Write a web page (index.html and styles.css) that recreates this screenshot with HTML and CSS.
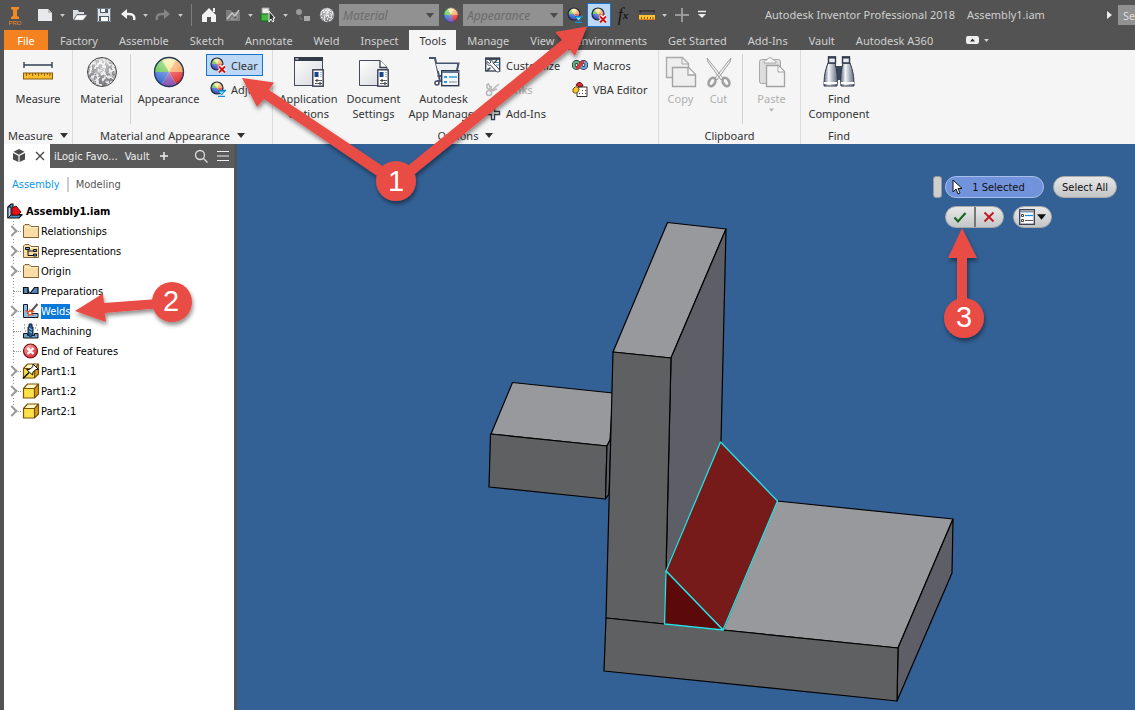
FILE: index.html
```html
<!DOCTYPE html>
<html lang="en">
<head>
<meta charset="utf-8">
<title>Autodesk Inventor Professional 2018</title>
<link rel="stylesheet" href="styles.css">
</head>
<body>
<svg class="sprite" aria-hidden="true">
  <defs>
    <linearGradient id="metal" x1="0" x2="1" y1="0" y2="1"><stop offset="0" stop-color="#fff"/><stop offset="1" stop-color="#d5d7dc"/></linearGradient>
    <linearGradient id="steel" x1="0" x2="1"><stop offset="0" stop-color="#596579"/><stop offset=".35" stop-color="#f4f6f9"/><stop offset="1" stop-color="#626d80"/></linearGradient>
    <radialGradient id="shine" cx=".5" cy=".1" r=".8"><stop offset="0" stop-color="#fff" stop-opacity=".65"/><stop offset="1" stop-color="#fff" stop-opacity="0"/></radialGradient>
    <radialGradient id="redball" cx=".35" cy=".25" r=".9"><stop offset="0" stop-color="#f9a6a6"/><stop offset="1" stop-color="#cf1720"/></radialGradient>
    <filter id="grain" x="0" y="0" width="1" height="1"><feTurbulence type="fractalNoise" baseFrequency=".3" numOctaves="3" seed="4"/><feColorMatrix values="0 0 0 0 .2  0 0 0 0 .2  0 0 0 0 .22  4 4 0 0 -3.4"/><feComposite in2="SourceAlpha" operator="in"/></filter>
    <filter id="shadow" x="-20%" y="-20%" width="150%" height="150%"><feDropShadow dx="1" dy="3" stdDeviation="2" flood-opacity=".45"/></filter>
  </defs>
  <symbol id="wheel" viewBox="0 0 32 32">
    <path fill="#f2e05c" d="M16 16 8.500 3a15 15 0 0 1 15 0z"/><path fill="#f79646" d="M16 16 23.500 3A15 15 0 0 1 31 16z"/><path fill="#e63232" d="M16 16H31a15 15 0 0 1-7.500 13z"/><path fill="#8c5ab4" d="M16 16l7.500 13a15 15 0 0 1-15 0z"/><path fill="#3f6fd0" d="M16 16 8.500 29A15 15 0 0 1 1 16z"/><path fill="#54c03c" d="M16 16H1A15 15 0 0 1 8.500 3z"/>
    <circle cx="16" cy="16" r="14.500" fill="url(#shine)" stroke="#26395c" stroke-width="1.300"/>
  </symbol>
  <symbol id="ball" viewBox="0 0 32 32"><circle cx="16" cy="16" r="14.500" fill="#e9e9e9"/><circle cx="16" cy="16" r="14" filter="url(#grain)"/><circle cx="16" cy="16" r="14.500" fill="url(#shine)" stroke="#444" stroke-width="1"/></symbol>
  <symbol id="miniwheel" viewBox="0 0 16 16"><circle cx="7" cy="7" r="6" fill="#f3da45"/><path fill="#45b53c" d="M7 7 3 2.300A6 6 0 0 0 1 7z"/><path fill="#3156c8" d="M7 7H1a6 6 0 0 0 6 6z"/><path fill="#8b4da7" d="M7 7v6a6 6 0 0 0 4-1.500z"/><path fill="#e43b32" d="M7 7l4 4.500A6 6 0 0 0 13 7z"/><path fill="#f59142" d="M7 7h6a6 6 0 0 0-2.500-4.800z"/><circle cx="7" cy="7" r="6" fill="url(#shine)" stroke="#1d2740" stroke-width="1.200"/></symbol>
  <symbol id="clear" viewBox="0 0 16 16"><use href="#miniwheel"/><path d="M9 9l6 6M15 9l-6 6" stroke="#fff" stroke-width="4"/><path d="M9 9.500l6 6M15 9.500l-6 6" stroke="#d01414" stroke-width="2"/></symbol>
  <symbol id="adjust" viewBox="0 0 16 16"><use href="#miniwheel"/><path d="M7 9.500h9M8 15.500h7" stroke="#1494d2" stroke-width="1.500"/><path d="M8 10h7l-3.500 4z" fill="#7fe3ff" stroke="#0678b8"/></symbol>
  <symbol id="measure" viewBox="0 0 32 32"><path d="M2 9h28M2 6v6M30 6v6" stroke="#333f55" stroke-width="1.400" fill="none"/><rect x="1.500" y="17" width="29" height="6" fill="#f8bd2a" stroke="#8a5b12"/><path d="M4.500 17v3M7.500 17v2M10.500 17v3M13.500 17v2M16.500 17v3M19.500 17v2M22.500 17v3M25.500 17v2M28 17v3" stroke="#6b4a10" stroke-width=".8"/></symbol>
  <symbol id="minimeasure" viewBox="0 0 16 16"><path d="M1 4h14M1 3v3M15 3v3" stroke="#222" fill="none"/><rect x="0" y="8" width="16" height="4" fill="#ffc42e"/><path d="M0 12.500h16" stroke="#e07a1a"/><path d="M2.500 10v2M5.500 10v2M8.500 10v2M11.500 10v2M14 10v2" stroke="#7b5310"/></symbol>
  <symbol id="sheet" viewBox="0 0 12 18"><rect x=".8" y=".8" width="10.400" height="16.400" fill="#fff" stroke="#343b4c" stroke-width="1.400"/><rect x="2.500" y="3" width="4" height="5" fill="#16478c"/><path d="M8 3.500h2M8 5.500h2M8 7.500h2" stroke="#98bde8"/><path d="M3 11.500h7M3 14.500h7" stroke="#444" stroke-width=".9"/><path d="M5 10v3M8 13v3" stroke="#444" stroke-width="1.200"/></symbol>
  <symbol id="appopt" viewBox="0 0 32 32"><rect x="1.500" y="1.500" width="28" height="28" fill="url(#metal)" stroke="#444b5a"/><path d="M1 1h29v4H1z" fill="#323947"/><path d="M2.500 3h3" stroke="#fff"/><use href="#sheet" x="19" y="13" width="12" height="18"/></symbol>
  <symbol id="docset" viewBox="0 0 32 32"><path d="M1.500 4.500h20.500l7 7v18H1.500z" fill="url(#metal)" stroke="#444b5a"/><path d="M22 4.500v7h7" fill="#fff" stroke="#343b4c" stroke-width="1.300"/><use href="#sheet" x="19" y="13" width="12" height="18"/></symbol>
  <symbol id="cart" viewBox="0 0 32 32"><path d="M1 2h6l5 23H9M7.500 7.500h23L29 14M9.500 20h4" fill="#f8f9fb" stroke="#47536b" stroke-width="2"/><path d="M8 8h21l-2 7H10z" fill="#eef0f4"/><circle cx="9" cy="27" r="2" fill="#fff" stroke="#47536b" stroke-width="1.600"/><rect x="13.700" y="14.700" width="17" height="15" fill="#f4f8fc" stroke="#303b4e" stroke-width="1.400"/><path d="M14 16h17" stroke="#60738f" stroke-width="2"/><path d="M16 20h3v2h-3zM16 25h3v2h-3z" fill="#2e9ae6"/><path d="M21 21h8" stroke="#138ae0" stroke-width="1.300"/><path d="M21 26h8" stroke="#888"/></symbol>
  <symbol id="customize" viewBox="0 0 16 16"><rect x=".700" y="1" width="14" height="13" fill="#fff" stroke="#333b4b" stroke-width="1.300"/><path d="M1 2h14" stroke="#333b4b" stroke-width="1.800"/><path d="M10 5.500h4M11 8h3M2 12h3" stroke="#3996d4"/><path d="M2 4.500c-1 3 2 4.500 3.500 3.500l6 6.500c1.500 1.500 4-.5 2.500-2.500L8 6C8.500 3.500 6 2.500 4.500 3l1.500 2-1.500 1.500z" fill="#fff" stroke="#39404e"/><path d="M2 14l3.500-3.500M9 6l3-3" stroke="#39404e" stroke-width="1.400"/></symbol>
  <symbol id="links" viewBox="0 0 16 16"><path d="M3 2l4 8M14 3 6 10M2 3v3c0 3 5 3 4-1M7 10l5-2" fill="none" stroke="#b9b9b9" stroke-width="1.600"/><circle cx="4" cy="12" r="2.500" fill="none" stroke="#b9b9b9" stroke-width="1.500"/></symbol>
  <symbol id="plus" viewBox="0 0 16 16"><path d="M6.500 1.500h3v5h5v3h-5v5h-3v-5h-5v-3h5z" fill="#fff" stroke="#353c4a" stroke-width="1.400"/></symbol>
  <symbol id="macros" viewBox="0 0 16 16"><ellipse cx="4.500" cy="8" rx="2.800" ry="3" fill="#eef4ee" stroke="#283860" stroke-width="3.800"/><ellipse cx="4.500" cy="8" rx="2.800" ry="3" fill="none" stroke="#67b76c" stroke-width="2"/><ellipse cx="11.500" cy="8" rx="2.800" ry="3" fill="#eef4ee" stroke="#283860" stroke-width="3.800"/><ellipse cx="11.500" cy="8" rx="2.800" ry="3" fill="none" stroke="#74a7dd" stroke-width="2"/><path d="M5.500 11l5-6" stroke="#db342d" stroke-width="3" stroke-linecap="round"/></symbol>
  <symbol id="vba" viewBox="0 0 16 16"><path d="M6 6h9v9.500H5V10z" fill="#fff" stroke="#333"/><path d="M7 12.500h1m2 0h1m2 0h1M10 9.500h1m2 0h1" stroke="#444"/><path d="M4 4c2-4 6-3 7 1L7 6z" fill="#dd2830" stroke="#53121a"/><path d="M1 8c3-4 6-2 6 1-1 3-4 4-6 2z" fill="#f9c92c" stroke="#6c4709"/></symbol>
  <symbol id="copy" viewBox="0 0 32 32"><path d="M1.500 1.500h16l6 6v14h-22z" fill="#eee" stroke="#a9a9a9" stroke-width="1.300"/><path d="M17 2v6h6" fill="none" stroke="#a9a9a9"/><path d="M7.500 11.500h16l7 7v12h-23z" fill="#efefef" stroke="#a3a3a3" stroke-width="1.400"/><path d="M23 12v7h7" fill="#fff" stroke="#a3a3a3" stroke-width="1.300"/></symbol>
  <symbol id="cut" viewBox="0 0 32 32"><path d="M4 2l16 20-2 2L5 6zM28 2 12 22l2 2L27 6z" fill="#eee" stroke="#a3a3a3"/><ellipse cx="9" cy="26" rx="3" ry="4.500" transform="rotate(30 9 26)" fill="none" stroke="#a0a0a0" stroke-width="2.600"/><ellipse cx="23" cy="26" rx="3" ry="4.500" transform="rotate(-30 23 26)" fill="none" stroke="#a0a0a0" stroke-width="2.600"/></symbol>
  <symbol id="paste" viewBox="0 0 32 32"><rect x="3.500" y="3.500" width="21" height="24" rx="2" fill="#ddd" stroke="#a8a8a8"/><path d="M8 7c0-2 1-3 3-3 0-3 6-3 6 0 2 0 3 1 3 3z" fill="#f7f7f7" stroke="#a8a8a8"/><path d="M10.500 9.500h12l6 6v15h-18z" fill="#f3f3f3" stroke="#a3a3a3" stroke-width="1.300"/><path d="M22 10v6h6" fill="#fff" stroke="#a3a3a3"/></symbol>
  <symbol id="binoc" viewBox="0 0 32 32"><path d="M12 10h8v14h-8z" fill="#3b4659"/><path d="M5 7h7c2 8 3 14 2 23H1c0-10 1-15 4-23z" fill="url(#steel)" stroke="#30394b"/><path d="M20 7h7c3 8 4 13 4 23H18c-1-9 0-15 2-23z" fill="url(#steel)" stroke="#30394b"/><path d="M5.500 1h7v6h-7zM19.500 1h7v6h-7z" fill="#e6e9ef" stroke="#30394b" stroke-width="1.400"/><path d="M5 1.500h8M19 1.500h8" stroke="#30394b" stroke-width="2"/><path d="M1 27h13M18 27h13" stroke="#fff" stroke-width="2"/></symbol>
  <symbol id="caret" viewBox="0 0 8 5"><path d="M0 0h8L4 5z" fill="currentColor"/></symbol>
  <symbol id="folder" viewBox="0 0 18 16"><path d="M1.500 14.500V3L3 1.500h4L9 3.500h7.500v11z" fill="#f9dda4" stroke="#85633a"/><path d="M2.500 4.500h13" stroke="#fff1cf"/></symbol>
  <symbol id="reps" viewBox="0 0 18 16"><use href="#folder"/><path d="M6 6v6.500h6M6 8h5" fill="none" stroke="#111"/><path d="M3.500 4.500h4v2h-4zM11.500 6.500h3v2h-3zM11.500 11h3v2h-3z" fill="#65a9e2" stroke="#111"/></symbol>
  <symbol id="prep" viewBox="0 0 18 16"><path d="M1.500 4.500H6l0 6H1.500zM8 10.500l4.500-6H16v6z" fill="#5187b8" stroke="#111" stroke-width="1.200"/><path d="M6 4.500l2 6H6z" fill="#111"/></symbol>
  <symbol id="weld" viewBox="0 0 18 16"><path d="M1.500 1.500h4v9H16v4H1.500z" fill="#8dbbe4" stroke="#16202c"/><path d="M15.500 1 9 8.500" stroke="#555" stroke-width="2"/><path d="M3 7l4 1 1-3 1 3 4 0-3 2 2 3-4-1-2 2v-3z" fill="#f05122"/><circle cx="8" cy="10" r="1.300" fill="#fff"/></symbol>
  <symbol id="mach" viewBox="0 0 18 16"><path d="M1.500 10.500h4v2h7v-2h3.500v4.500H1.500z" fill="#6da0cf" stroke="#111"/><path d="M7 1h3v3h1v8l-2.500 2L6 12V4h1z" fill="#24588a" stroke="#132236"/><path d="M7 5l3 2M7 8l3 2" stroke="#a9cbe8"/><path d="M2 5h1M3 8h1M13 5h1M15 7h1M2 2h1M14 2h1" stroke="#555"/></symbol>
  <symbol id="end" viewBox="0 0 18 16"><circle cx="8.500" cy="8" r="7" fill="url(#redball)" stroke="#70141a" stroke-width="1.200"/><path d="M5.500 5l6 6M11.500 5l-6 6" stroke="#fff" stroke-width="2.200"/></symbol>
  <symbol id="cube" viewBox="0 0 18 16"><path d="M1.500 5.500l4-4.500h11l-4 4.500z" fill="#fff7c6"/><path d="M12.500 5.500l4-4.500v10l-4 4z" fill="#d99a12"/><path d="M1.500 5.500h11v9.500h-11z" fill="#fbe04a"/><path d="M1.500 5.500l4-4.500h11v10l-4 4h-11zM1.500 5.500h11M12.500 5.500l4-4.500M12.500 5.500V15" fill="none" stroke="#785006" stroke-width="1.200"/></symbol>
  <symbol id="pin" viewBox="0 0 18 16"><use href="#cube"/><path d="M1 15.500l6-6" stroke="#111" stroke-width="1.500"/><path d="M4.500 6.500 10.500 12l.5-3 3-2.500 2.500 0L11 1v2.500L7.500 6.500z" fill="#fff" stroke="#111"/></symbol>
  <symbol id="asm" viewBox="0 0 16 16"><path d="M1 4l3-3h2v9l9 2-3 3H1z" fill="#4d91ca" stroke="#111" stroke-width="1.200"/><path d="M1 4h3v8l-3 3zM4 12h11" fill="#b9d5ed" stroke="#111"/><path d="M5 5l4-2 5 6-3 3H5z" fill="#ed1018" stroke="#620509"/></symbol>
</svg>

<div class="app">
  <header class="quick">
    <svg class="logo" viewBox="0 0 16 20"><path d="M4 1h8v2l-2 1v6l2 1v2H4v-2l2-1V4L4 3z" fill="#ef8a25"/><text x="8" y="19" text-anchor="middle" class="logo-text">PRO</text></svg>
    <button class="qb" aria-label="New"><svg viewBox="0 0 16 16"><path d="M1 2h10l4 4v8H1z" fill="#e8e9ec"/><path d="M11 2v4h4" fill="#bbb"/></svg></button>
    <button class="qc" aria-label="New options"><svg><use href="#caret"/></svg></button>
    <button class="qb" aria-label="Open"><svg viewBox="0 0 16 16"><path d="M1 13V3h5l1 2h5v2H5z" fill="#d9dce1"/><path d="M5 8h10l-4 5H2z" fill="#fff" stroke="#8b909a" stroke-width=".6"/></svg></button>
    <button class="qb" aria-label="Save"><svg viewBox="0 0 16 16"><path d="M1 1h14v14H1z" fill="#dfe3e9"/><path d="M4 1h8v5H4zM3 9h10v6H3z" fill="#505966"/><path d="M5 1h4v4H5zM5 10h7v5H5z" fill="#fff"/><path d="M1.500 1.500h13v13h-13z" fill="none" stroke="#707988"/></svg></button>
    <button class="qb" aria-label="Undo"><svg viewBox="0 0 16 16"><path d="M5 7h4c4 0 6 2 5 6" fill="none" stroke="#f4f4f4" stroke-width="2.500"/><path d="M7 2v10L1 7z" fill="#f4f4f4"/></svg></button>
    <button class="qc" aria-label="Undo list"><svg><use href="#caret"/></svg></button>
    <button class="qb" aria-label="Redo"><svg viewBox="0 0 16 16"><path d="M11 7H7c-4 0-6 2-5 6" fill="none" stroke="#858585" stroke-width="2.500"/><path d="M9 2v10l6-5z" fill="#858585"/></svg></button>
    <button class="qc" aria-label="Redo list"><svg><use href="#caret"/></svg></button>
    <span class="qsep"></span>
    <button class="qb" aria-label="Home"><svg viewBox="0 0 16 16"><path d="M8 1 1 8v7h5v-5h4v5h5V8z" fill="#f1f2f4"/><path d="M12 1h2v4h-2z" fill="#f1f2f4"/></svg></button>
    <button class="qb" aria-label="Return"><svg viewBox="0 0 16 16"><path d="M1 3h5l1 2h8v9H1z" fill="#7d7d7d"/><path d="M2 12l5-6 3 3 4-6" stroke="#c5c5c5" stroke-width="1.500" fill="none"/><path d="M6 12l6-4v4z" fill="#4d4d4d" stroke="#aaa"/></svg></button>
    <button class="qc" aria-label="Return options"><svg><use href="#caret"/></svg></button>
    <button class="qb" aria-label="Selection filter"><svg viewBox="0 0 16 16"><path d="M2 1h7v6H2z" fill="#eee" stroke="#999"/><path d="M1 7h8v7H1z" fill="#43b943" stroke="#186c20"/><path d="M9 4v11l2-3 2 3 1-1-1-3h2z" fill="#333" stroke="#fff"/></svg></button>
    <button class="qc" aria-label="Selection options"><svg><use href="#caret"/></svg></button>
    <button class="qb" aria-label="Relationships"><svg viewBox="0 0 16 16"><circle cx="4" cy="5" r="3" fill="#999"/><path d="M9 9h6v5H9z" fill="#aaa"/><path d="M5 9v3h3" stroke="#777" fill="none"/></svg></button>
    <button class="qb" aria-label="Material browser"><svg><use href="#ball"/></svg></button>
    <label class="combo"><select aria-label="Material"><option>Material</option></select><svg><use href="#caret"/></svg></label>
    <button class="qb" aria-label="Appearance browser"><svg><use href="#wheel"/></svg></button>
    <label class="combo"><select aria-label="Appearance"><option>Appearance</option></select><svg><use href="#caret"/></svg></label>
    <button class="qb" aria-label="Adjust appearance"><svg><use href="#adjust"/></svg></button>
    <button class="qb lit" aria-label="Clear appearance"><svg><use href="#clear"/></svg></button>
    <button class="qb fx" aria-label="Parameters"><i>f</i><sub>x</sub></button>
    <button class="qb" aria-label="Measure"><svg><use href="#minimeasure"/></svg></button>
    <button class="qc" aria-label="Measure options"><svg><use href="#caret"/></svg></button>
    <button class="qb" aria-label="Add"><svg viewBox="0 0 16 16"><path d="M8 1v14M1 8h14" stroke="#999" stroke-width="2"/></svg></button>
    <button class="qb custom" aria-label="Customize toolbar"><svg viewBox="0 0 10 10"><path d="M1 1.500h8" stroke="#eee" stroke-width="1.500"/><path d="M1 4h8L5 8z" fill="#eee"/></svg></button>
    <h1 class="title"><span>Autodesk Inventor Professional 2018</span><span>Assembly1.iam</span></h1>
    <button class="qc expand" aria-label="Expand search"><svg viewBox="0 0 5 8"><path d="M0 0v8l5-4z" fill="#eee"/></svg></button>
    <input class="search" aria-label="Search" placeholder="Search">
  </header>

  <nav class="tabs">
    <button class="tab file">File</button><button class="tab">Factory</button><button class="tab">Assemble</button><button class="tab">Sketch</button><button class="tab">Annotate</button><button class="tab">Weld</button><button class="tab">Inspect</button><button class="tab active">Tools</button><button class="tab">Manage</button><button class="tab">View</button><button class="tab">Environments</button><button class="tab">Get Started</button><button class="tab">Add-Ins</button><button class="tab">Vault</button><button class="tab">Autodesk A360</button>
    <button class="tab fold" aria-label="Minimize ribbon"><svg class="foldbox" viewBox="0 0 13 8"><rect width="13" height="8" rx="2" fill="#eee"/><path d="M4 5.500h5L6.500 2.500z" fill="#333"/></svg><svg class="foldcaret"><use href="#caret"/></svg></button>
  </nav>

  <section class="ribbon">
    <div class="panel p-measure">
      <div class="tools"><button class="big w-measure"><svg><use href="#measure"/></svg>Measure</button></div>
      <button class="ptitle">Measure<svg><use href="#caret"/></svg></button>
    </div>
    <div class="panel p-material">
      <div class="tools">
        <button class="big w-material"><svg><use href="#ball"/></svg>Material</button>
        <span class="rule"></span>
        <button class="big w-appear"><svg><use href="#wheel"/></svg>Appearance</button>
        <div class="stack w-material"><button class="small on"><svg><use href="#clear"/></svg>Clear</button><button class="small"><svg><use href="#adjust"/></svg>Adjust</button></div>
      </div>
      <button class="ptitle">Material and Appearance<svg><use href="#caret"/></svg></button>
    </div>
    <div class="panel p-options">
      <div class="tools">
        <button class="big w-options"><svg><use href="#appopt"/></svg>Application<br>Options</button>
        <button class="big w-doc"><svg><use href="#docset"/></svg>Document<br>Settings</button>
        <button class="big w-appear"><svg><use href="#cart"/></svg>Autodesk<br>App Manager</button>
        <div class="stack w-stack"><button class="small"><svg><use href="#customize"/></svg>Customize</button><button class="small" disabled><svg><use href="#links"/></svg>Links</button><button class="small"><svg><use href="#plus"/></svg>Add-Ins</button></div>
        <div class="stack w-stack"><button class="small"><svg><use href="#macros"/></svg>Macros</button><button class="small"><svg><use href="#vba"/></svg>VBA Editor</button></div>
      </div>
      <button class="ptitle">Options<svg><use href="#caret"/></svg></button>
    </div>
    <div class="panel p-clip">
      <div class="tools">
        <button class="big w-copy" disabled><svg><use href="#copy"/></svg>Copy</button>
        <button class="big w-cut" disabled><svg><use href="#cut"/></svg>Cut</button>
        <span class="rule"></span>
        <button class="big w-material" disabled><svg><use href="#paste"/></svg>Paste<svg class="drop"><use href="#caret"/></svg></button>
      </div>
      <div class="ptitle">Clipboard</div>
    </div>
    <div class="panel p-find">
      <div class="tools"><button class="big w-find"><svg><use href="#binoc"/></svg>Find<br>Component</button></div>
      <div class="ptitle">Find</div>
    </div>
  </section>

  <main class="work">
    <aside class="browser">
      <div class="btabs">
        <div class="bactive"><svg class="boxicon" viewBox="0 0 14 14"><path d="M7 0l5.500 2.800L7 5.700 1.500 2.800zM1 4l5.400 2.800V13L1 10.500zM13 4 7.600 6.800V13L13 10.500z" fill="#4b4b4b"/></svg><button class="close" aria-label="Close"><svg viewBox="0 0 10 10"><path d="M1 1l8 8M9 1 1 9" stroke="#444" stroke-width="1.300"/></svg></button></div>
        <button class="bt">iLogic Favo...</button><button class="bt">Vault</button>
        <button class="bi add" aria-label="Add tab"><svg viewBox="0 0 10 10"><path d="M5 1v8M1 5h8" stroke="#eee" stroke-width="1.500"/></svg></button>
        <button class="bi find" aria-label="Find"><svg viewBox="0 0 14 14"><circle cx="6" cy="6" r="4.500" fill="none" stroke="#ddd" stroke-width="1.300"/><path d="M9.500 9.500l4 4" stroke="#ddd" stroke-width="1.300"/></svg></button>
        <button class="bi" aria-label="Menu"><svg viewBox="0 0 14 14"><path d="M1 2.500h12M1 7h12M1 11.500h12" stroke="#eee" stroke-width="1.200"/></svg></button>
      </div>
      <div class="modes"><a href="#assembly" class="cur">Assembly</a><a href="#modeling">Modeling</a></div>
      <div class="root"><svg><use href="#asm"/></svg>Assembly1.iam</div>
      <ul class="tree">
        <li><button class="tw" aria-label="Expand"></button><svg><use href="#folder"/></svg><span>Relationships</span></li>
        <li><button class="tw" aria-label="Expand"></button><svg><use href="#reps"/></svg><span>Representations</span></li>
        <li><button class="tw" aria-label="Expand"></button><svg><use href="#folder"/></svg><span>Origin</span></li>
        <li class="leaf"><svg><use href="#prep"/></svg><span>Preparations</span></li>
        <li><button class="tw" aria-label="Expand"></button><svg><use href="#weld"/></svg><span class="sel">Welds</span></li>
        <li class="leaf"><svg><use href="#mach"/></svg><span>Machining</span></li>
        <li class="leaf"><svg><use href="#end"/></svg><span>End of Features</span></li>
        <li><button class="tw" aria-label="Expand"></button><svg><use href="#pin"/></svg><span>Part1:1</span></li>
        <li><button class="tw" aria-label="Expand"></button><svg><use href="#cube"/></svg><span>Part1:2</span></li>
        <li><button class="tw" aria-label="Expand"></button><svg><use href="#cube"/></svg><span>Part2:1</span></li>
      </ul>
    </aside>
    <section class="view">
      <svg class="model" role="img" aria-label="Welded assembly">
        <g transform="translate(-237 -144)" stroke="#000" stroke-width="1.200" stroke-linejoin="round">
          <path fill="#98999d" d="M512.500 382.500 613 393 610 440 607 446 491 434z"/>
          <path fill="#5e6062" d="M490.500 434 607 446 605.500 499 489 487z"/>
          <path fill="#5e5e67" d="M607 446l4-8-2 56-3.500 5z"/>
          <path fill="#98999d" d="M667.500 222.500 726 229 671 358 613 352z"/>
          <path fill="#5e5e67" d="M671 358 726 229 721 442 666 571z"/>
          <path fill="#5e6062" d="M613 352 671 358 666 571 665 624 606 618z"/>
          <path fill="#98999d" d="M777 501 953 519 898 648 723 630z"/>
          <path fill="#5e5e67" d="M898 648 953 519 952 573 897 701z"/>
          <path fill="#5e6062" d="M606 618 898 648 897 701 604 671z"/>
          <g stroke="#24e4e8" stroke-width="1.300"><path fill="#761a1a" d="M720.500 442 777.500 501 723 630 666 571z"/><path fill="#5c0909" d="M666 571 723 630 664.500 624z"/></g>
        </g>
      </svg>
      <div class="mini">
        <div class="mrow"><span class="grip"></span><button class="pill selected"><svg viewBox="0 0 10 16"><path d="M1 1v12l3-3 2 5 2-1-2-4.500h4z" fill="#fff" stroke="#111"/></svg>1 Selected</button><button class="pill all">Select All</button></div>
        <div class="mrow second"><div class="pair"><button aria-label="Apply"><svg viewBox="0 0 14 14"><path d="M1.500 7.500 5 11.500 12.500 3" fill="none" stroke="#126417" stroke-width="2"/></svg></button><button aria-label="Cancel"><svg viewBox="0 0 14 14"><path d="M2.500 2.500l9 9M11.500 2.500l-9 9" stroke="#c3161c" stroke-width="1.800"/></svg></button></div><button class="pill opts" aria-label="Options"><svg viewBox="0 0 16 16"><rect x=".700" y=".700" width="14.600" height="14.600" fill="#fff" stroke="#313b4a" stroke-width="1.300"/><path d="M1 2.500h14" stroke="#8693a5" stroke-width="2"/><path d="M2.500 5.500h2v2h-2zM2.500 10.500h2v2h-2z" fill="none" stroke="#444"/><path d="M6 6.500h8" stroke="#188ce2" stroke-width="1.300"/><path d="M6 11.500h8" stroke="#555"/></svg><svg class="optcaret"><use href="#caret"/></svg></button></div>
      </div>
    </section>
  </main>
</div>

<svg class="notes" aria-label="Steps 1 to 3">
  <g fill="#e94b45" filter="url(#shadow)">
    <path d="M242 78 274 82.500 269 90 399 177 392 186 264 99 257 107z"/>
    <path d="M587 26.500 575 56 569 49 400 186 393 178 562 40 555 32z"/>
    <circle cx="396" cy="181" r="20"/>
  </g>
  <g fill="#e94b45" filter="url(#shadow)"><path d="M75 311 103 293.500 104 303 172 298V307L105 313 106 322z"/><circle cx="172" cy="302" r="20"/></g>
  <g fill="#e94b45" filter="url(#shadow)"><path d="M962 228 977 258H967V318H957V258H948z"/><circle cx="964" cy="318" r="20"/></g>
  <g class="num"><text x="396" y="191">1</text><text x="171" y="311">2</text><text x="964" y="327">3</text></g>
</svg>
</body>
</html>
```
FILE: styles.css
```css
* { box-sizing: border-box; }
body { margin: 0; font: 11px/15px "Noto Sans", "Open Sans", sans-serif; color: #333; }
button, input, select { font: inherit; color: inherit; margin: 0; padding: 0; border: 0; background: none; }
button { display: flex; align-items: center; justify-content: center; white-space: nowrap; }
ul { list-style: none; margin: 0; padding: 0; }
svg { flex: none; display: block; }
.sprite { position: absolute; width: 0; height: 0; }
.app { display: flex; flex-direction: column; min-height: 100vh; background: #535353; position: relative; }

.quick { display: flex; align-items: center; height: 30px; padding-left: 7px; overflow: hidden; }
.logo { width: 16px; height: 20px; margin: 2px 10px 0 0; }
.logo-text { font: 6px "Liberation Sans", sans-serif; fill: #ef8a25; }
.qb { width: 24px; height: 24px; flex: none; }
.qb svg { width: 16px; height: 16px; }
.qc { width: 11px; height: 24px; flex: none; color: #ccc; }
.qc svg { width: 5px; height: 3px; }
.qsep { width: 1px; height: 22px; margin: 0 5px 0 5px; background: #7d7d7d; flex: none; }
.lit { background: #bcd8f4; border: 1px solid #1874d1; }
.fx { color: #151515; font: 18px "Liberation Serif", serif; }
.fx sub { font-size: 11px; font-style: italic; font-weight: bold; }
.custom { width: 16px; }
.custom svg { width: 10px; height: 10px; }
.combo { display: grid; grid-template-columns: 1fr 13px; align-items: center; width: 100px; height: 22px; background: #919191; flex: none; }
.combo select { grid-area: 1 / 1 / 2 / 3; appearance: none; padding-left: 4px; height: 22px; font-size: 12px; font-style: italic; color: #6b6b6b; }
.combo svg { grid-area: 1 / 2; width: 8px; height: 5px; color: #4c4c4c; }
.title { flex: 1; display: flex; gap: 12px; margin: 0 0 2px 55px; font-size: 11px; font-weight: 400; color: #cfcfcf; white-space: nowrap; }
.expand svg { width: 5px; height: 8px; }
.search { width: 17px; height: 20px; margin-left: 3px; padding-left: 5px; background: #919191; }
.search::placeholder { color: #ddd; opacity: 1; }

.tabs { display: flex; gap: 1px; height: 20px; padding-left: 4px; color: #d0d0d0; }
.tab { padding: 0 10px; flex: none; }
.file { background: #f58220; color: #fff; width: 44px; margin-right: 1px; }
.active { background: #f5f5f5; color: #333; }
.fold { padding-left: 22px; gap: 5px; }
.foldbox { width: 13px; height: 8px; }
.foldcaret { width: 5px; height: 3px; }

.ribbon { display: flex; height: 94px; margin-left: 4px; background: #f5f5f5; }
.panel { display: flex; flex-direction: column; border-right: 1px solid #dcdcdc; }
.p-find { border: 0; }
.tools { display: flex; flex: 1; padding-top: 4px; }
.ptitle { display: flex; align-items: center; justify-content: center; gap: 7px; height: 18px; }
.ptitle svg { width: 8px; height: 5px; }
.big { flex-direction: column; justify-content: flex-start; padding-top: 2px; text-align: center; flex: none; }
.big svg { width: 32px; height: 32px; margin-bottom: 3px; }
.big .drop { width: 5px; height: 4px; margin-top: 2px; }
button:disabled { color: #b0b0b0; }
.p-measure { width: 69px; }
.w-measure { width: 68px; }
.w-material { width: 57px; }
.w-appear { width: 75px; }
.w-options { width: 65px; margin-left: 3px; }
.w-doc { width: 65px; }
.w-copy { width: 43px; }
.w-cut { width: 33px; margin-right: 7px; }
.w-find { width: 76px; }
.w-stack { width: 87px; }
.rule { width: 1px; height: 70px; background: #d0d0d0; }
.stack { display: flex; flex-direction: column; gap: 2px; }
.small { justify-content: flex-start; gap: 5px; height: 22px; padding: 0 3px; border: 1px solid transparent; }
.small svg { width: 16px; height: 16px; }
.on { background: #bcd8f4; border-color: #1874d1; }
.p-material { width: 200px; }
.p-options { width: 386px; }
.p-clip { width: 142px; }

.work { display: flex; flex: 1; }
.browser { width: 237px; flex: none; border: solid #535353; border-width: 0 3px 0 4px; background: #fff; font: 11px/15px "DejaVu Sans Condensed", "Noto Sans", sans-serif; color: #000; }
.btabs { display: flex; height: 24px; background: #5b5b5b; color: #eee; }
.bactive { display: flex; align-items: center; width: 46px; padding-left: 8px; gap: 9px; background: #fff; }
.boxicon { width: 14px; height: 14px; }
.close svg { width: 10px; height: 10px; }
.bt { padding: 0 3px 0 4px; }
.bi { width: 22px; }
.bi svg { width: 14px; height: 14px; }
.add svg { width: 10px; height: 10px; }
.find { margin-left: auto; }
.modes { display: flex; gap: 7px; padding: 9px 8px; height: 33px; align-items: center; }
.modes a { color: #555; text-decoration: none; }
.modes a + a { border-left: 2px solid #ccc; padding-left: 7px; }
.modes .cur { color: #0a96f0; }
.root { display: flex; align-items: center; gap: 3px; height: 20px; padding-left: 3px; font-weight: bold; }
.root svg { width: 16px; height: 16px; }
.tree { background: repeating-linear-gradient(#999 0 1px, transparent 1px 3px) 9px 0 / 1px calc(100% - 10px) no-repeat; }
.tree li { display: flex; align-items: center; height: 20px; padding-left: 4px; }
.tree li svg { width: 18px; height: 16px; margin-right: 1px; }
.tree li::before { content: ""; order: 1; width: 3px; margin-right: 1px; border-top: 1px dotted #999; }
.tree li > * { order: 2; }
.tree li .tw { order: 0; width: 10px; height: 12px; justify-content: flex-start; background: #fff; }
.tw::before { content: ""; width: 6px; height: 6px; border: solid #999; border-width: 2px 2px 0 0; transform: rotate(45deg); }
.tree .leaf { padding-left: 9px; }
.tree .leaf::before { width: 8px; }
.sel { background: #0a78d7; color: #fff; }

.view { flex: 1; display: grid; position: relative; background: #336195; overflow: hidden; }
.model { width: 100%; height: 100%; }
.mini { position: absolute; left: 696px; top: 32px; display: flex; flex-direction: column; gap: 8px; font: 11px/15px "DejaVu Sans Condensed", "Noto Sans", sans-serif; color: #111; }
.mrow { display: flex; height: 22px; }
.second { padding-left: 12px; }
.grip { width: 9px; height: 22px; margin-right: 3px; border: 1px solid #999; border-radius: 3px; background: #cfcfcf; }
.pill, .pair { border: 1px solid #aaa; border-radius: 11px; background: linear-gradient(#e8e8e8, #c3c5c7); }
.selected { width: 99px; gap: 10px; margin-right: 9px; padding-right: 12px; background: #7193dc; border-color: #a8bdeb; }
.selected svg { width: 10px; height: 16px; }
.all { width: 64px; }
.pair { display: flex; width: 59px; margin-right: 9px; }
.pair button { flex: 1; }
.pair button + button { border-left: 2px solid #777; }
.pair svg { width: 14px; height: 14px; }
.opts { width: 39px; gap: 2px; }
.opts svg { width: 16px; height: 16px; }
.opts .optcaret { width: 9px; height: 6px; }

.notes { position: absolute; inset: 0; width: 100%; height: 100%; pointer-events: none; }
.num { font: 29px "Liberation Sans", sans-serif; fill: #fff; text-anchor: middle; }
```
